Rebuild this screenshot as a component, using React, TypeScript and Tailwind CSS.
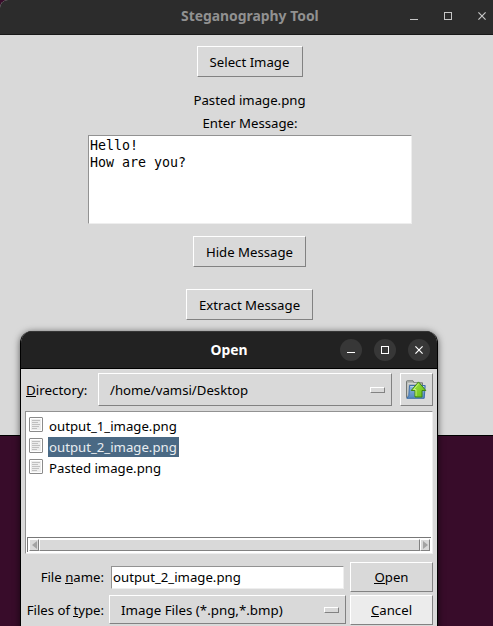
import type { ReactNode } from "react";

const raised = "border border-t-white border-l-white border-r-[#828282] border-b-[#828282] bg-[#d9d9d9]";

function Button({ children, className }: { children: ReactNode; className: string }) {
  return (
    <button className={`flex shrink-0 items-center justify-center whitespace-nowrap ${raised} ${className}`}>
      {children}
    </button>
  );
}

function Key({ children }: { children: ReactNode }) {
  return <span className="inline-block h-[16px] border-b border-black leading-[18px]">{children}</span>;
}

function Minimize() {
  return (
    <svg width="8" height="9" viewBox="0 0 8 9" shapeRendering="crispEdges">
      <path d="M0 7.5H8" stroke="currentColor" />
    </svg>
  );
}

function Maximize() {
  return (
    <svg width="8" height="8" viewBox="0 0 8 8" shapeRendering="crispEdges">
      <rect x="0.5" y="0.5" width="7" height="7" fill="none" stroke="currentColor" />
    </svg>
  );
}

function Close() {
  return (
    <svg width="8" height="8" viewBox="0 0 8 8">
      <path d="M0.4 0.4L7.6 7.6M7.6 0.4L0.4 7.6" fill="none" stroke="currentColor" strokeWidth="1.2" />
    </svg>
  );
}

function FileIcon() {
  return (
    <svg width="14" height="15" viewBox="0 0 14 15" className="mt-px shrink-0">
      <rect x="0.5" y="0.5" width="13" height="14" rx="0.5" fill="#fff" stroke="#8b8b8b" />
      <rect x="2" y="2" width="10" height="11" fill="#ededed" />
      <path d="M3 3.5H11M3 5.5H9M3 7.5H11M3 9.5H10M3 11.5H8" stroke="#c0c0c0" />
    </svg>
  );
}

function FolderUp() {
  return (
    <svg width="22" height="20" viewBox="0 0 22 20">
      <defs>
        <linearGradient id="folder" x1="0" y1="0" x2="0" y2="1">
          <stop offset="0" stopColor="#8fb8e2" />
          <stop offset="1" stopColor="#5387be" />
        </linearGradient>
        <linearGradient id="arrow" x1="0" y1="0" x2="1" y2="1">
          <stop offset="0" stopColor="#a4e544" />
          <stop offset="1" stopColor="#65bc16" />
        </linearGradient>
      </defs>
      <path d="M1.5 17.5V1.5Q1.5 0.8 2.2 0.8H8L9 2.8H17.5V17.5Z" fill="#b4b7b4" stroke="#747874" />
      <path d="M3 3.5H15M3 3.5V15" fill="none" stroke="#d3d6d3" />
      <path d="M4.5 5.5H20.2L19.2 18.3H1.8L3.8 15.5Z" fill="url(#folder)" stroke="#3d6ea8" />
      <path d="M5.4 6.5H19" stroke="#b6d0eb" />
      <path d="M13.5 1.9L20.8 10.5H17V17H10V10.5H6.2Z" fill="url(#arrow)" stroke="#3f8510" strokeLinejoin="round" />
      <path d="M13.5 3.8L8.5 9.6H11V16" fill="none" stroke="#d5f894" strokeWidth="0.8" />
    </svg>
  );
}

function MenuHandle() {
  return <span className={`h-[6px] w-[15px] shrink-0 ${raised}`} />;
}

function DialogControl({ children }: { children: ReactNode }) {
  return <button className="flex size-[22px] items-center justify-center rounded-full bg-[#373737]">{children}</button>;
}

function MainWindow() {
  return (
    <section className="absolute top-0 left-0 flex h-[436px] w-[493px] flex-col items-center overflow-hidden rounded-tl-[8px] border-b border-black bg-[#d9d9d9]">
      <header className="grid h-[35px] w-full shrink-0 grid-cols-[181px_1fr_83px] items-center border-b border-[#181818] bg-[#2c2c2c] text-[#919191]">
        <span />
        <h1 className="pb-[2px] text-[13.9px] leading-[20px] font-bold whitespace-nowrap">Steganography Tool</h1>
        <div className="flex items-center gap-[26px] pb-[2px] text-[#c6c6c6]">
          <Minimize /><Maximize /><Close />
        </div>
      </header>
      <main className="flex w-full flex-col items-center pl-[6px]">
        <Button className="mt-[11px] h-[31px] w-[106px]">Select Image</Button>
        <p className="mt-[14px] h-[18px] leading-[18px]">Pasted image.png</p>
        <p className="mt-[5px] h-[18px] pl-px leading-[18px]">Enter Message:</p>
        <div className="mt-[3px] h-[89px] w-[324px] border border-t-[#929292] border-r-[#eeeeee] border-b-[#eeeeee] border-l-[#929292] bg-white pt-px pl-[1.5px] font-['DejaVu_Sans_Mono',monospace] text-[13.3px] leading-[17px]">
          <p>Hello!</p>
          <p>How are you?</p>
        </div>
        <Button className="mt-[12px] h-[31px] w-[113px]">Hide Message</Button>
        <Button className="mt-[22px] h-[31px] w-[127px]">Extract Message</Button>
      </main>
    </section>
  );
}

const files = ["output_1_image.png", "output_2_image.png", "Pasted image.png"];

function OpenDialog() {
  return (
    <section className="absolute top-[331px] left-[20px] flex h-[300px] w-[418px] flex-col overflow-hidden rounded-t-[12px] border-x border-black bg-[#d9d9d9] shadow-[0_1px_7px_rgba(0,0,0,0.6)]">
      <header className="grid h-[38px] shrink-0 grid-cols-[1fr_auto_1fr] items-center border-b border-black bg-[#222222] text-white shadow-[inset_0_1px_#363636]">
        <span />
        <h2 className="text-[13.9px] leading-[18px] font-bold">Open</h2>
        <div className="flex justify-end gap-[12px] pr-[7px]">
          <DialogControl><Minimize /></DialogControl>
          <DialogControl><Maximize /></DialogControl>
          <DialogControl><Close /></DialogControl>
        </div>
      </header>
      <div className="flex flex-1 flex-col px-[4px] pt-[4px]">
        <div className="flex h-[33px] items-center">
          <p className="w-[73px] shrink-0 pl-px text-[13.4px]"><Key>D</Key>irectory:</p>
          <div className={`flex h-[33px] w-[294px] items-center justify-between pr-[6px] pl-[11px] ${raised}`}>
            <span>/home/vamsi/Desktop</span>
            <MenuHandle />
          </div>
          <Button className="ml-[8px] h-[33px] w-[33px] pr-px"><FolderUp /></Button>
        </div>
        <div className="mt-[5px] flex h-[143px] w-[408px] flex-col border border-t-[#929292] border-r-[#eeeeee] border-b-[#eeeeee] border-l-[#929292] bg-white">
          <ul className="flex-1 pt-[4px] pl-[3px]">
            {files.map((file, i) => (
              <li key={file} className="flex h-[21px] items-start">
                <FileIcon />
                <span className={`ml-[5px] h-[20px] px-px leading-[20px] ${i === 1 ? "bg-[#4a6984] pr-[2px] text-[#e8edf1]" : ""}`}>{file}</span>
              </li>
            ))}
          </ul>
          <div className="mx-px mb-px flex h-[15px] border-t border-l border-[#777777] bg-white pt-px pl-px">
            <span className={`flex h-[12px] w-[10px] items-center justify-center ${raised}`}>
              <svg width="5" height="8" viewBox="0 0 5 8"><path d="M5 0V8L0 4Z" fill="#a3a3a3" /></svg>
            </span>
            <span className={`h-[12px] flex-1 ${raised}`} />
            <span className={`mr-px flex h-[12px] w-[10px] items-center justify-center ${raised}`}>
              <svg width="5" height="8" viewBox="0 0 5 8"><path d="M0 0V8L5 4Z" fill="#a3a3a3" /></svg>
            </span>
          </div>
        </div>
        <div className="mt-[8px] flex h-[30px] items-center">
          <p className="w-[86px] shrink-0 pr-[7px] text-right whitespace-nowrap">File <Key>n</Key>ame:</p>
          <div className="h-[23px] w-[233px] border border-t-[#929292] border-r-[#eeeeee] border-b-[#eeeeee] border-l-[#929292] bg-white pl-px leading-[20px]">output_2_image.png</div>
          <Button className="ml-[6px] h-[30px] w-[83px]"><span><Key>O</Key>pen</span></Button>
        </div>
        <div className="mt-[3px] flex h-[30px] items-start">
          <p className="w-[84px] shrink-0 pt-[6px] pr-[5px] text-right whitespace-nowrap">Files of <Key>t</Key>ype:</p>
          <div className={`flex h-[29px] w-[237px] items-center justify-between pr-[6px] pl-[11px] ${raised}`}>
            <span className="text-[13.33px]">Image Files (*.png,*.bmp)</span>
            <MenuHandle />
          </div>
          <Button className="ml-[4px] h-[30px] w-[83px] !bg-[#ececec]"><span><Key>C</Key>ancel</span></Button>
        </div>
      </div>
    </section>
  );
}

export default function App() {
  return (
    <div className="relative h-[626px] w-[493px] overflow-hidden bg-[#380c2a] font-['Noto_Sans',sans-serif] text-[13.2px] leading-[18px] text-black">
      <MainWindow />
      <OpenDialog />
    </div>
  );
}
